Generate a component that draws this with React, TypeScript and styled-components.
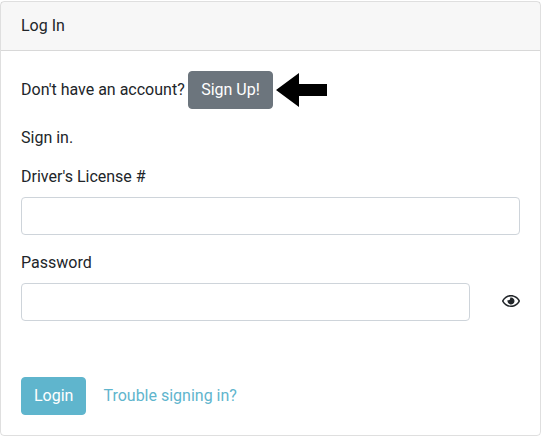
import React from "react";
import styled, { createGlobalStyle } from "styled-components";

const Global = createGlobalStyle`
  html, body { margin: 0; padding: 0; background: #fff; }
  * { box-sizing: border-box; }
  body { font-family: Roboto, "Liberation Sans", sans-serif; font-size: 16px; line-height: 24px; color: #212529; }
`;

const Card = styled.div`
  width: 541px;
  height: 435px;
  margin-top: 1px;
  border: 1px solid rgba(0,0,0,.125);
  border-radius: 4px;
  display: flex;
  flex-direction: column;
`;
const CardHeader = styled.div`
  height: 49px;
  padding: 12px 20px;
  background: rgba(0,0,0,.03);
  border-bottom: 1px solid rgba(0,0,0,.125);
`;
const CardBody = styled.div`
  padding: 20px;
  flex: 1;
  display: flex;
  flex-direction: column;
`;
const SignUpRow = styled.div`
  display: flex;
  align-items: center;
  gap: 3px;
  height: 38px;
`;
const Button = styled.button<{ $bg: string; $px: number }>`
  height: 38px;
  padding: 0 ${p => p.$px}px;
  border: 1px solid ${p => p.$bg};
  border-radius: 4px;
  background: ${p => p.$bg};
  color: #fff;
  font: inherit;
`;
const Arrow = styled.svg`
  display: block;
`;
const Para = styled.div`
  margin-top: 17px;
  margin-bottom: 15px;
`;
const Field = styled.div`
  margin-bottom: 16px;
`;
const Label = styled.label`
  display: block;
  margin-bottom: 8px;
`;
const Input = styled.input`
  display: block;
  width: 100%;
  height: 38px;
  border: 1px solid #ced4da;
  border-radius: 4px;
  background: #fff;
`;
const PasswordRow = styled.div`
  display: flex;
  align-items: center;
`;
const PasswordInput = styled(Input)`
  width: 449px;
`;
const EyeBox = styled.div`
  flex: 1;
  display: flex;
  justify-content: flex-end;
  margin-bottom: 3px;
`;
const Actions = styled.div`
  margin-top: auto;
  display: flex;
  align-items: center;
  gap: 17px;
`;
const TextLink = styled.a`
  color: #5fb5cd;
  text-decoration: none;
`;

export default function App() {
  return (
    <>
      <Global />
      <Card>
        <CardHeader>Log In</CardHeader>
        <CardBody>
          <SignUpRow>
            Don't have an account?
            <Button $bg="#6c757d" $px={12.5}>Sign Up!</Button>
            <Arrow width="52" height="34" viewBox="0 0 52 34">
              <path d="M0 17 L23 0 V11 H51 V23 H23 V34 Z" fill="#000" />
            </Arrow>
          </SignUpRow>
          <Para>Sign in.</Para>
          <Field>
            <Label>Driver's License #</Label>
            <Input />
          </Field>
          <Field>
            <Label>Password</Label>
            <PasswordRow>
              <PasswordInput type="password" />
              <EyeBox>
                <svg width="18" height="16" viewBox="0 0 576 512" fill="#212529">
                  <path d="M288 144a110.94 110.94 0 0 0-31.24 5 55.4 55.4 0 0 1 7.24 27 56 56 0 0 1-56 56 55.4 55.4 0 0 1-27-7.24A111.71 111.71 0 1 0 288 144zm284.52 97.4C518.29 135.59 410.93 64 288 64S57.68 135.64 3.48 241.41a32.35 32.35 0 0 0 0 29.19C57.71 376.41 165.07 448 288 448s230.32-71.64 284.52-177.41a32.35 32.35 0 0 0 0-29.19zM288 400c-98.65 0-189.09-55-237.93-144C98.91 167 189.34 112 288 112s189.09 55 237.93 144C477.1 345 386.66 400 288 400z" />
                </svg>
              </EyeBox>
            </PasswordRow>
          </Field>
          <Actions>
            <Button $bg="#5fb5cd" $px={12}>Login</Button>
            <TextLink href="#">Trouble signing in?</TextLink>
          </Actions>
        </CardBody>
      </Card>
    </>
  );
}
